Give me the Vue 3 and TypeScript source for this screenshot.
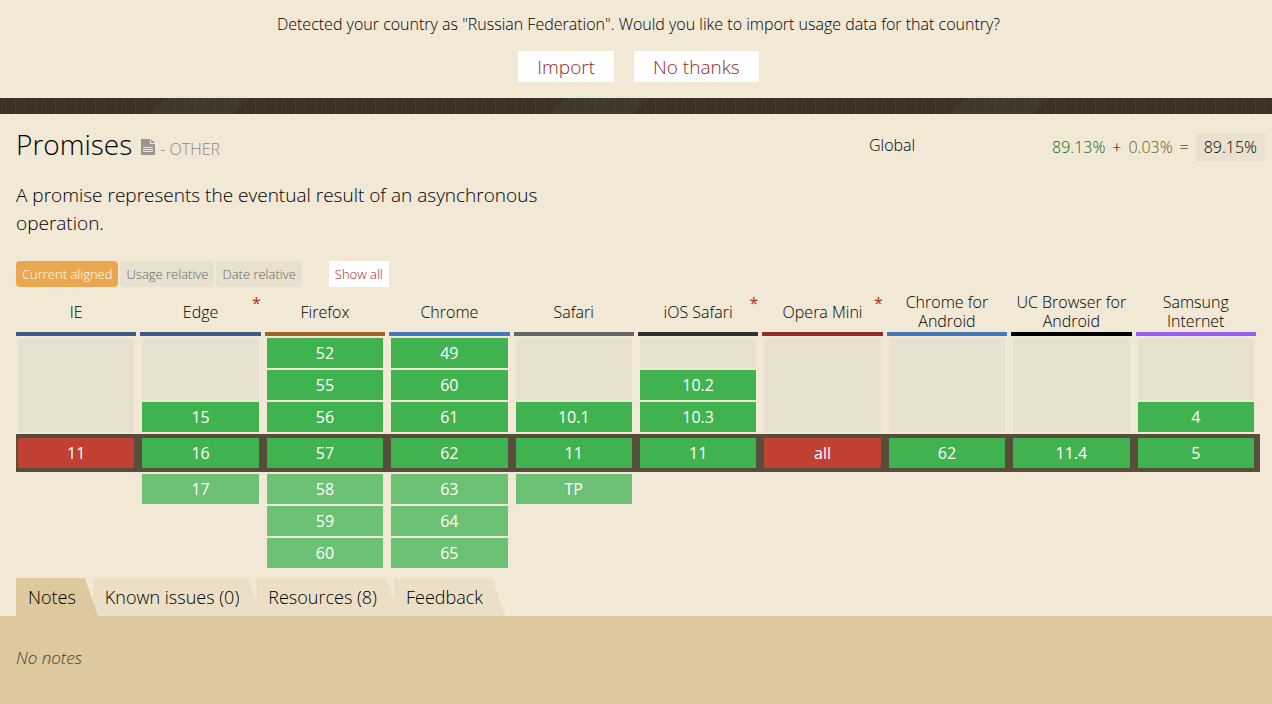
<script setup lang="ts">
import { ref } from 'vue'

type Support = 'yes' | 'no' | 'future' | 'blank' | 'none'
interface Browser { name: string; tone: string; flagged?: boolean }
interface Cell { label?: string; support: Support; rows?: number; last?: boolean }
interface Row { current?: boolean; cells: Cell[] }

const browsers: Browser[] = [
  { name: 'IE', tone: 'navy' },
  { name: 'Edge', tone: 'navy', flagged: true },
  { name: 'Firefox', tone: 'brown' },
  { name: 'Chrome', tone: 'blue' },
  { name: 'Safari', tone: 'gray' },
  { name: 'iOS Safari', tone: 'dark', flagged: true },
  { name: 'Opera Mini', tone: 'crimson', flagged: true },
  { name: 'Chrome for Android', tone: 'blue' },
  { name: 'UC Browser for Android', tone: 'black' },
  { name: 'Samsung Internet', tone: 'violet' },
]

const yes = (label: string, last = false): Cell => ({ label, support: 'yes', last })
const no = (label: string): Cell => ({ label, support: 'no' })
const future = (label: string): Cell => ({ label, support: 'future' })
const blank = (rows: number): Cell => ({ support: 'blank', rows, last: rows === 3 })
const none: Cell = { support: 'none' }

const rows: Row[] = [
  { cells: [blank(3), blank(2), yes('52'), yes('49'), blank(2), blank(1), blank(3), blank(3), blank(3), blank(2)] },
  { cells: [yes('55'), yes('60'), yes('10.2')] },
  { cells: [yes('15', true), yes('56', true), yes('61', true), yes('10.1', true), yes('10.3', true), yes('4', true)] },
  {
    current: true,
    cells: [no('11'), yes('16'), yes('57'), yes('62'), yes('11'), yes('11'), no('all'), yes('62'), yes('11.4'), yes('5')],
  },
  { cells: [none, future('17'), future('58'), future('63'), future('TP'), none, none, none, none, none] },
  { cells: [none, none, future('59'), future('64'), none, none, none, none, none, none] },
  { cells: [none, none, future('60'), future('65'), none, none, none, none, none, none] },
]

const modes = ['Current aligned', 'Usage relative', 'Date relative']
const mode = ref('Current aligned')
const tabs = ['Notes', 'Known issues (0)', 'Resources (8)', 'Feedback']
const tab = ref('Notes')
</script>

<template>
  <div class="page">
    <section class="notice">
      <p>Detected your country as "Russian Federation". Would you like to import usage data for that country?</p>
      <div class="notice-actions">
        <button type="button">Import</button>
        <button type="button">No thanks</button>
      </div>
    </section>
    <div class="stripe"></div>

    <main>
      <header class="feature">
        <div class="about">
          <div class="heading">
            <h1>Promises</h1>
            <a href="#spec" class="spec" aria-label="Specification">
              <svg viewBox="0 0 14 16" width="14" height="16">
                <path d="M0 0h9v5h5v11H0z M10 0l4 4h-4z" fill="#999590" />
                <path d="M2 8.5h10M2 10.5h10M2 12.5h10" stroke="#f1e8d6" stroke-width="1" />
              </svg>
            </a>
            <span class="status">- OTHER</span>
          </div>
          <p class="description">A promise represents the eventual result of an asynchronous operation.</p>
        </div>
        <div class="usage">
          <span class="region">Global</span>
          <span class="numbers">
            <span class="full">89.13%</span><span>+</span><span class="partial">0.03%</span><span>=</span><span class="total">89.15%</span>
          </span>
        </div>
      </header>

      <div class="tools">
        <div class="modes">
          <button v-for="m in modes" :key="m" type="button" :class="{ active: m === mode }" @click="mode = m">{{ m }}</button>
        </div>
        <button type="button" class="show-all">Show all</button>
      </div>

      <table>
        <thead>
          <tr>
            <th v-for="b in browsers" :key="b.name" scope="col">
              <div class="browser" :class="b.tone">{{ b.name }}<span v-if="b.flagged" class="flag">*</span></div>
            </th>
          </tr>
        </thead>
        <tbody>
          <tr v-for="(r, i) in rows" :key="i" :class="{ current: r.current }">
            <td v-for="(c, j) in r.cells" :key="j" :rowspan="c.rows" :class="[c.support, { last: c.last }]">{{ c.label }}</td>
          </tr>
        </tbody>
      </table>

      <nav class="tabs" role="tablist">
        <button v-for="t in tabs" :key="t" type="button" role="tab" :aria-selected="t === tab" :class="{ active: t === tab }" @click="tab = t">{{ t }}</button>
      </nav>
      <section class="panel"><em>No notes</em></section>
    </main>
  </div>
</template>

<style>
body {
  background: #f1e8d6;
}
</style>

<style scoped>
.page {
  display: flex;
  flex-direction: column;
  min-height: 100vh;
  font-family: "Open Sans", "Liberation Sans", sans-serif;
  font-size: 16px;
  font-weight: 300;
  line-height: 20px;
  color: #000;
  background: #f1e8d6;
}
button {
  font: inherit;
  color: inherit;
  border: 0;
  margin: 0;
  cursor: pointer;
}
p, h1 {
  margin: 0;
  font-weight: 300;
}
.notice {
  padding: 14px 16px 16px;
  text-align: center;
}
.notice p {
  padding-left: 5px;
}
.notice-actions {
  display: flex;
  justify-content: center;
  gap: 20px;
  margin-top: 17px;
  padding-left: 5px;
}
.notice-actions button {
  height: 31px;
  padding: 0 19px;
  background: #fff;
  color: #96281f;
  font-size: 19px;
}
.stripe {
  height: 16px;
  background:
    repeating-linear-gradient(90deg, transparent 0 5px, rgba(255, 240, 210, 0.04) 5px 6px, transparent 6px 10px),
    linear-gradient(135deg, transparent 0 116px, #40372d 116px 176px, transparent 176px) 0 0 / 400px 16px,
    #3c3325;
}
main {
  display: flex;
  flex-direction: column;
  flex: 1;
}
.feature {
  display: flex;
  justify-content: space-between;
  padding: 9px 7px 0 16px;
}
.about {
  width: 44%;
}
.heading {
  display: flex;
  align-items: baseline;
  color: #8d8984;
}
h1 {
  font-size: 28px;
  line-height: 42px;
  color: #000;
}
.spec {
  margin: 0 5px 0 9px;
}
.spec svg {
  display: block;
}
.description {
  margin-top: 16px;
  font-size: 19px;
  line-height: 28px;
}
.usage {
  display: flex;
  justify-content: space-between;
  align-items: flex-start;
  width: 396px;
  margin-top: 10px;
}
.region {
  line-height: 24px;
}
.numbers {
  display: flex;
  align-items: center;
  gap: 7px;
}
.full {
  color: #0b6a1a;
}
.partial {
  color: #645b14;
}
.total {
  padding: 4px 8px;
  background: #e9e1cf;
}
.tools {
  display: flex;
  gap: 27px;
  margin: 24px 16px 5px;
}
.modes {
  display: flex;
  gap: 2px;
}
.tools button {
  height: 26px;
  padding: 0 6px;
  border-radius: 4px;
  background: #e9e1cf;
  color: #66635d;
  font-size: 13px;
}
.tools .active {
  background: #eba74f;
  color: #fff;
}
.tools .show-all {
  border-radius: 0;
  background: #fff;
  color: #96281f;
}
table {
  width: calc(100% - 28px);
  margin: 0 12px 0 16px;
  table-layout: fixed;
  border-collapse: separate;
  border-spacing: 0;
}
th {
  padding: 0 4px 0 0;
  font-weight: 300;
}
.browser {
  position: relative;
  display: flex;
  align-items: center;
  justify-content: center;
  height: 40px;
  border-bottom: 4px solid;
  line-height: 19px;
}
.flag {
  position: absolute;
  top: 2px;
  right: 0;
  color: #b02a1c;
  font-weight: 400;
}
.navy { border-color: #3b5a87; }
.brown { border-color: #a0632b; }
.blue { border-color: #4679ba; }
.gray { border-color: #666; }
.dark { border-color: #302f2d; }
.crimson { border-color: #942a2a; }
.black { border-color: #000; }
.violet { border-color: #975df3; }
td {
  height: 30px;
  padding: 2px 6px 0 2px;
  background-clip: content-box;
  color: #fff;
  font-weight: 400;
  line-height: 30px;
  text-align: center;
}
td.last {
  padding-bottom: 2px;
}
.yes { background-color: #40b350; }
.no { background-color: #c04134; }
.future { background-color: #6cc174; }
.blank { background-color: #e9e1cf; }
.current {
  background: #564e3b;
}
.current td {
  padding: 4px 6px 4px 2px;
}
.tabs {
  display: flex;
  margin: 10px 16px 0;
}
.tabs button {
  position: relative;
  height: 38px;
  padding: 0 22px 0 12px;
  margin-right: -5px;
  background: #ecdfc7;
  clip-path: polygon(0 0, calc(100% - 13px) 0, 100% 100%, 0 100%);
  font-size: 18px;
}
.tabs .active {
  z-index: 1;
  background: #dec89d;
}
.panel {
  flex: 1;
  padding: 32px 16px;
  background: #dec89d;
  color: #4c432e;
  font-size: 17px;
}
</style>
